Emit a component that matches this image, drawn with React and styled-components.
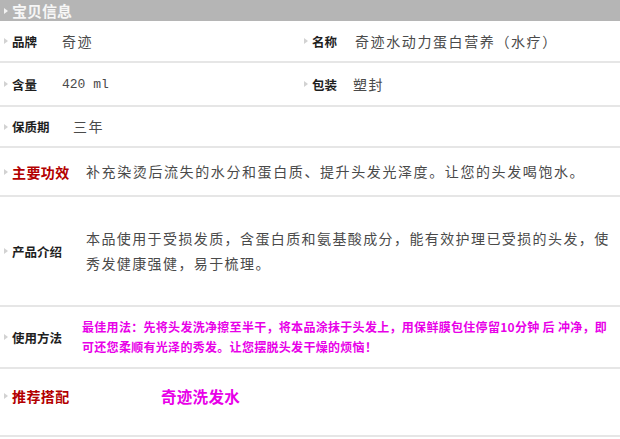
import React from 'react';
import styled, { createGlobalStyle } from 'styled-components';

const GlobalStyle = createGlobalStyle`
  html, body {
    margin: 0;
    padding: 0;
    background: #ffffff;
  }
  body {
    font-family: "Noto Sans CJK SC", "Liberation Sans", sans-serif;
  }
`;

const Page = styled.div`
  width: 620px;
  display: flex;
  flex-direction: column;
`;

const Header = styled.div`
  height: 21px;
  background: #b5b5b5;
  display: flex;
  align-items: center;
  padding-left: 4px;
  gap: 4px;
  color: #f6f6f6;
  font-size: 15px;
  font-weight: 700;
  line-height: 1;
`;

const Bullet = styled.span`
  width: 0;
  height: 0;
  flex: none;
  border-top: 3px solid transparent;
  border-bottom: 3px solid transparent;
  border-left: 4px solid ${(p) => p.$color || '#d2d2d2'};
`;

const Row = styled.div`
  height: ${(p) => p.$h}px;
  box-sizing: border-box;
  border-bottom: 2px solid #e6e6e6;
  display: flex;
  align-items: center;
  padding-bottom: ${(p) => p.$pb || 0}px;
`;

const Cell = styled.div`
  width: ${(p) => (p.$w ? `${p.$w}px` : 'auto')};
  flex: ${(p) => (p.$w ? 'none' : '1')};
  display: flex;
  align-items: center;
  padding-left: 4px;
  box-sizing: border-box;
`;

const Label = styled.div`
  width: ${(p) => p.$w}px;
  flex: none;
  margin-left: 4px;
  font-weight: 700;
  font-size: ${(p) => (p.$red ? 14 : 12.5)}px;
  color: ${(p) => (p.$red ? '#b30000' : '#1e1e1e')};
  letter-spacing: ${(p) => (p.$red ? 0.4 : 0)}px;
  white-space: nowrap;
`;

const Value = styled.div`
  font-size: 14px;
  letter-spacing: 1.6px;
  color: #4a4a4a;
  line-height: 25px;
  white-space: nowrap;
`;

const Amount = styled.div`
  font-family: "Liberation Mono", monospace;
  font-size: 13px;
  color: #4a4a4a;
`;

const Usage = styled.div`
  font-size: 12px;
  font-weight: 700;
  letter-spacing: 0.3px;
  color: #e800e8;
  line-height: 20px;
  white-space: nowrap;
`;

const Pairing = styled.div`
  font-size: 15.5px;
  font-weight: 700;
  color: #e800e8;
  letter-spacing: 0.3px;
`;

export default function App() {
  return (
    <>
      <GlobalStyle />
      <Page>
        <Header>
          <Bullet $color="#f2f2f2" />
          宝贝信息
        </Header>

        <Row $h={42}>
          <Cell $w={300}>
            <Bullet />
            <Label $w={50}>品牌</Label>
            <Value>奇迹</Value>
          </Cell>
          <Cell>
            <Bullet />
            <Label $w={43}>名称</Label>
            <Value>奇迹水动力蛋白营养（水疗）</Value>
          </Cell>
        </Row>

        <Row $h={44}>
          <Cell $w={300}>
            <Bullet />
            <Label $w={50}>含量</Label>
            <Amount>420 ml</Amount>
          </Cell>
          <Cell>
            <Bullet />
            <Label $w={41}>包装</Label>
            <Value>塑封</Value>
          </Cell>
        </Row>

        <Row $h={41}>
          <Cell>
            <Bullet />
            <Label $w={61}>保质期</Label>
            <Value>三年</Value>
          </Cell>
        </Row>

        <Row $h={49}>
          <Cell>
            <Bullet />
            <Label $w={74} $red>主要功效</Label>
            <Value>补充染烫后流失的水分和蛋白质、提升头发光泽度。让您的头发喝饱水。</Value>
          </Cell>
        </Row>

        <Row $h={110}>
          <Cell>
            <Bullet />
            <Label $w={74}>产品介绍</Label>
            <Value style={{ letterSpacing: '1.4px' }}>
              本品使用于受损发质，含蛋白质和氨基酸成分，能有效护理已受损的头发，使
              <br />
              秀发健康强健，易于梳理。
            </Value>
          </Cell>
        </Row>

        <Row $h={62}>
          <Cell>
            <Bullet />
            <Label $w={70}>使用方法</Label>
            <Usage>
              最佳用法：先将头发洗净擦至半干，将本品涂抹于头发上，用保鲜膜包住停留10分钟 后 冲净，即
              <br />
              可还您柔顺有光泽的秀发。让您摆脱头发干燥的烦恼！
            </Usage>
          </Cell>
        </Row>

        <Row $h={68} $pb={12}>
          <Cell>
            <Bullet />
            <Label $w={149} $red>推荐搭配</Label>
            <Pairing>奇迹洗发水</Pairing>
          </Cell>
        </Row>
      </Page>
    </>
  );
}
